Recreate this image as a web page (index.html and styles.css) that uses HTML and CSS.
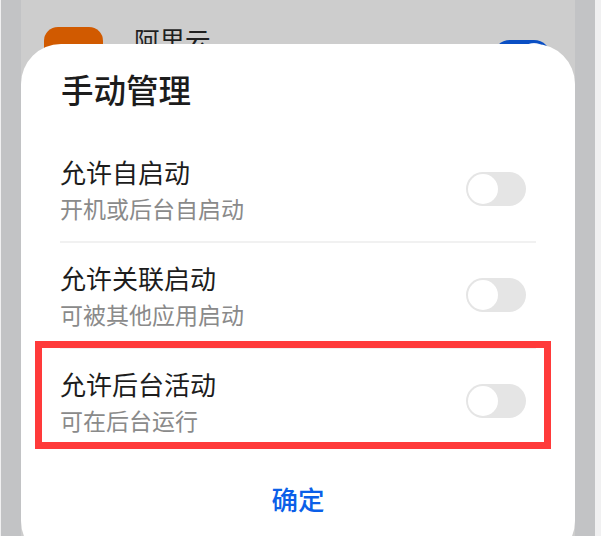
FILE: index.html
```html
<!DOCTYPE html>
<html lang="zh-CN">
<head>
<meta charset="utf-8">
<title>手动管理</title>
<link rel="stylesheet" href="styles.css">
</head>
<body>
<div class="screen">
  <div class="backdrop">
    <div class="app-row">
      <div class="app-icon"></div>
      <div class="app-name">阿里云</div>
      <div class="app-switch"><span class="app-knob"></span></div>
    </div>
  </div>
  <section class="dialog">
    <h1 class="dialog-title">手动管理</h1>
    <div class="option">
      <div class="option-text">
        <div class="option-name">允许自启动</div>
        <div class="option-desc">开机或后台自启动</div>
      </div>
      <div class="toggle"><span class="knob"></span></div>
    </div>
    <div class="option">
      <div class="option-text">
        <div class="option-name">允许关联启动</div>
        <div class="option-desc">可被其他应用启动</div>
      </div>
      <div class="toggle"><span class="knob"></span></div>
    </div>
    <div class="option option-last">
      <div class="option-text">
        <div class="option-name">允许后台活动</div>
        <div class="option-desc">可在后台运行</div>
      </div>
      <div class="toggle"><span class="knob"></span></div>
    </div>
    <div class="dialog-action">确定</div>
  </section>
  <div class="highlight"></div>
</div>
</body>
</html>
```
FILE: styles.css
```css
* { box-sizing: border-box; }
html, body { margin: 0; height: 100%; }
body {
  background: #f0f0f1;
  overflow: hidden;
  font-family: "Noto Sans CJK SC", "Noto Sans", sans-serif;
}
.screen {
  position: relative;
  width: 595px;
  height: 536px;
  border-left: 1px solid #f0f0f1;
  padding: 0 20px;
  background: #c2c3c5;
  overflow: hidden;
}
.backdrop {
  height: 100%;
  background: #cdcdcd;
}
.app-row {
  display: flex;
  align-items: flex-start;
  padding: 27px 24px 0 23px;
}
.app-icon {
  width: 59px;
  height: 59px;
  border-radius: 14px;
  background: #d15a00;
}
.app-name {
  margin: -3px 0 0 31px;
  font-size: 25.5px;
  line-height: 30px;
  color: #1f1f1f;
}
.app-switch {
  display: flex;
  align-items: center;
  justify-content: flex-end;
  width: 58px;
  height: 34px;
  padding: 3px;
  margin: 13px 0 0 auto;
  border-radius: 17px;
  background: #0a4fc4;
}
.app-knob {
  width: 28px;
  height: 28px;
  border-radius: 50%;
  background: #e8eefa;
}
.dialog {
  position: absolute;
  left: 20px;
  top: 44px;
  width: 554px;
  height: 517px;
  padding: 22px 39px 0;
  border-radius: 40px;
  background: #fff;
}
.dialog-title {
  margin: 0 0 25px 1px;
  font-size: 32.5px;
  line-height: 46px;
  font-weight: 500;
  color: #1c1c1c;
}
.option {
  display: flex;
  align-items: center;
  justify-content: space-between;
  height: 106px;
  padding-right: 10px;
  border-bottom: 2px solid #f1f1f1;
}
.option-last { border-bottom-color: transparent; }
.option-text { margin-top: 1px; }
.option-name {
  font-size: 26px;
  line-height: 36px;
  color: #1c1c1c;
}
.option-desc {
  margin-top: 1px;
  font-size: 23px;
  line-height: 34px;
  color: #8a8a8a;
}
.toggle {
  display: flex;
  align-items: center;
  width: 60px;
  height: 34px;
  padding: 2px;
  border-radius: 17px;
  background: #e5e5e5;
}
.knob {
  width: 30px;
  height: 30px;
  border-radius: 50%;
  background: #fff;
}
.dialog-action {
  margin-top: 26px;
  text-align: center;
  font-size: 26.5px;
  line-height: 36px;
  font-weight: 500;
  color: #0b5fe8;
}
.highlight {
  position: absolute;
  left: 34px;
  top: 341px;
  width: 516px;
  height: 108px;
  border: 7px solid #ff3a3a;
}
```
